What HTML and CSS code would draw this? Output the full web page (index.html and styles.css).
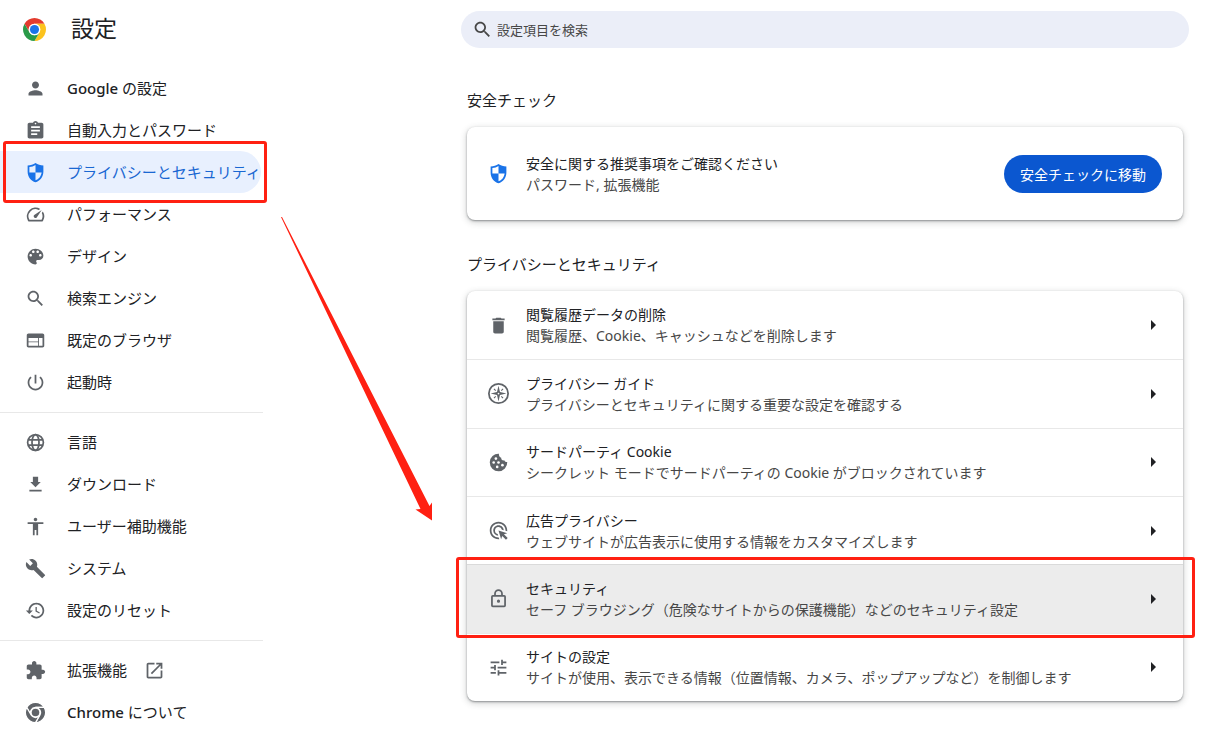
FILE: index.html
```html
<!DOCTYPE html>
<html lang="ja">
<head>
  <meta charset="UTF-8" />
  <meta name="viewport" content="width=device-width, initial-scale=1.0"/>
  <title>設定</title>
  <link rel="stylesheet" href="styles.css">
</head>
<body>

  <div class="sidebar">
    <div class="brand">
      <svg class="logo" viewBox="0 0 48 48">
        <path fill="#e33b2e" d="M3.22 12A24 24 0 0 1 44.78 12H24A12 12 0 0 0 13.6 30z"/>
        <path fill="#fcc31e" d="M44.78 12H24a12 12 0 0 1 10.4 18L24 48A24 24 0 0 0 44.78 12z"/>
        <path fill="#2a9a48" d="M3.22 12 13.6 30A12 12 0 0 0 34.4 30L24 48A24 24 0 0 1 3.22 12z"/>
        <circle cx="24" cy="24" r="12" fill="#fff"/>
        <circle cx="24" cy="24" r="9.5" fill="#1a73e8"/>
      </svg>
      <h1>設定</h1>
    </div>

    <nav class="menu">
      <a href="#" class="menu-item">
        <svg class="icon" viewBox="0 0 24 24"><path d="M12 12c2.21 0 4-1.79 4-4s-1.79-4-4-4-4 1.79-4 4 1.79 4 4 4zm0 2c-2.67 0-8 1.34-8 4v2h16v-2c0-2.66-5.33-4-8-4z"/></svg>
        <span><span class="latin">Google</span> の設定</span>
      </a>
      <a href="#" class="menu-item">
        <svg class="icon" viewBox="0 0 24 24"><path d="M19 3h-4.18C14.4 1.84 13.3 1 12 1c-1.3 0-2.4.84-2.82 2H5c-1.1 0-2 .9-2 2v14c0 1.1.9 2 2 2h14c1.1 0 2-.9 2-2V5c0-1.1-.9-2-2-2zm-7 0c.55 0 1 .45 1 1s-.45 1-1 1-1-.45-1-1 .45-1 1-1zm2 14H7v-2h7v2zm3-4H7v-2h10v2zm0-4H7V7h10v2z"/></svg>
        <span>自動入力とパスワード</span>
      </a>
      <a href="#" class="menu-item active">
        <svg class="icon" viewBox="0 0 24 24"><path d="M12 1C9.5 2.8 6.5 3.8 3 4v7c0 5.55 3.84 10.74 9 12 5.16-1.26 9-6.45 9-12V4c-3.5-.2-6.5-1.2-9-3zm0 11h7c-.53 4.12-3.28 7.79-7 8.94V12H5V5.8c2.6-.3 5-1.1 7-2.4z"/></svg>
        <span>プライバシーとセキュリティ</span>
      </a>
      <a href="#" class="menu-item">
        <svg class="icon" viewBox="0 0 24 24"><path d="M20.38 8.57l-1.23 1.85a8 8 0 0 1-.22 7.58H5.07A8 8 0 0 1 15.58 6.85l1.85-1.23A10 10 0 0 0 3.35 19a2 2 0 0 0 1.72 1h13.85a2 2 0 0 0 1.74-1 10 10 0 0 0-.27-10.44zm-9.79 6.84a2 2 0 0 0 2.83 0l5.66-8.49-8.49 5.66a2 2 0 0 0 0 2.83z"/></svg>
        <span>パフォーマンス</span>
      </a>
      <a href="#" class="menu-item">
        <svg class="icon" viewBox="0 0 24 24"><path d="M12 3c-4.97 0-9 4.03-9 9s4.03 9 9 9c.83 0 1.5-.67 1.5-1.5 0-.39-.15-.74-.39-1.01-.23-.26-.38-.61-.38-.99 0-.83.67-1.5 1.5-1.5H16c2.76 0 5-2.24 5-5 0-4.42-4.03-8-9-8zm-5.5 9c-.83 0-1.5-.67-1.5-1.5S5.67 9 6.5 9 8 9.67 8 10.5 7.33 12 6.5 12zm3-4C8.67 8 8 7.33 8 6.5S8.67 5 9.5 5s1.5.67 1.5 1.5S10.33 8 9.5 8zm5 0c-.83 0-1.5-.67-1.5-1.5S13.67 5 14.5 5s1.5.67 1.5 1.5S15.33 8 14.5 8zm3 4c-.83 0-1.5-.67-1.5-1.5S16.67 9 17.5 9s1.5.67 1.5 1.5-.67 1.5-1.5 1.5z"/></svg>
        <span>デザイン</span>
      </a>
      <a href="#" class="menu-item">
        <svg class="icon" viewBox="0 0 24 24"><path d="M15.5 14h-.79l-.28-.27C15.41 12.59 16 11.11 16 9.5 16 5.91 13.09 3 9.5 3S3 5.91 3 9.5 5.91 16 9.5 16c1.61 0 3.09-.59 4.23-1.57l.27.28v.79l5 4.99L20.49 19l-4.99-5zm-6 0C7.01 14 5 11.99 5 9.5S7.01 5 9.5 5 14 7.01 14 9.5 11.99 14 9.5 14z"/></svg>
        <span>検索エンジン</span>
      </a>
      <a href="#" class="menu-item">
        <svg class="icon" viewBox="0 0 24 24"><path d="M20 4H4c-1.1 0-1.99.9-1.99 2L2 18c0 1.1.9 2 2 2h16c1.1 0 2-.9 2-2V6c0-1.1-.9-2-2-2zm-5 14H4v-4h11v4zm0-5H4V9h11v4zm5 5h-4V9h4v9z"/></svg>
        <span>既定のブラウザ</span>
      </a>
      <a href="#" class="menu-item">
        <svg class="icon" viewBox="0 0 24 24"><path d="M13 3h-2v10h2V3zm4.83 2.17l-1.42 1.42C17.99 7.86 19 9.81 19 12c0 3.87-3.13 7-7 7s-7-3.13-7-7c0-2.19 1.01-4.14 2.58-5.42L6.17 5.17C4.23 6.82 3 9.26 3 12c0 4.97 4.03 9 9 9s9-4.03 9-9c0-2.74-1.23-5.18-3.17-6.83z"/></svg>
        <span>起動時</span>
      </a>

      <hr>

      <a href="#" class="menu-item">
        <svg class="icon line" viewBox="0 0 24 24"><circle cx="12" cy="12" r="9"/><ellipse cx="12" cy="12" rx="4" ry="9"/><path d="M3.5 9h17M3.5 15h17"/></svg>
        <span>言語</span>
      </a>
      <a href="#" class="menu-item">
        <svg class="icon" viewBox="0 0 24 24"><path d="M18 9h-3V3H9v6H6l6 6zM5 18v2h14v-2H5z"/></svg>
        <span>ダウンロード</span>
      </a>
      <a href="#" class="menu-item">
        <svg class="icon" viewBox="0 0 24 24"><path d="M12 2c1.1 0 2 .9 2 2s-.9 2-2 2-2-.9-2-2 .9-2 2-2zm9 7h-6v13h-2v-6h-2v6H9V9H3V7h18v2z"/></svg>
        <span>ユーザー補助機能</span>
      </a>
      <a href="#" class="menu-item">
        <svg class="icon" viewBox="0 0 24 24"><path d="M22.7 19l-9.1-9.1c.9-2.3.4-5-1.5-6.9-2-2-5-2.4-7.4-1.3L9 6 6 9 1.6 4.7C.4 7.1.9 10.1 2.9 12.1c1.9 1.9 4.6 2.4 6.9 1.5l9.1 9.1c.4.4 1 .4 1.4 0l2.3-2.3c.5-.4.5-1.1.1-1.4z"/></svg>
        <span>システム</span>
      </a>
      <a href="#" class="menu-item">
        <svg class="icon" viewBox="0 0 24 24"><path d="M13 3c-4.97 0-9 4.03-9 9H1l3.89 3.89.07.14L9 12H6c0-3.87 3.13-7 7-7s7 3.13 7 7-3.13 7-7 7c-1.93 0-3.68-.79-4.94-2.06l-1.42 1.42C8.27 19.99 10.51 21 13 21c4.97 0 9-4.03 9-9s-4.03-9-9-9zm-1 5v5l4.28 2.54.72-1.21-3.5-2.08V8H12z"/></svg>
        <span>設定のリセット</span>
      </a>

      <hr>

      <a href="#" class="menu-item">
        <svg class="icon" viewBox="0 0 24 24"><path d="M20.5 11H19V7c0-1.1-.9-2-2-2h-4V3.5C13 2.12 11.88 1 10.5 1S8 2.12 8 3.5V5H4c-1.1 0-1.99.9-1.99 2v3.8H3.5c1.49 0 2.7 1.21 2.7 2.7s-1.21 2.7-2.7 2.7H2V20c0 1.1.9 2 2 2h3.8v-1.5c0-1.49 1.21-2.7 2.7-2.7 1.49 0 2.7 1.21 2.7 2.7V22H17c1.1 0 2-.9 2-2v-4h1.5c1.38 0 2.5-1.12 2.5-2.5S21.88 11 20.5 11z"/></svg>
        <span>拡張機能</span>
        <svg class="icon external" viewBox="0 0 24 24"><path d="M19 19H5V5h7V3H5c-1.11 0-2 .9-2 2v14c0 1.1.89 2 2 2h14c1.1 0 2-.9 2-2v-7h-2v7zM14 3v2h3.59l-9.83 9.83 1.41 1.41L19 6.41V10h2V3h-7z"/></svg>
      </a>
      <a href="#" class="menu-item">
        <svg class="icon" viewBox="-1 -1 50 50">
          <g stroke="#fff" stroke-width="3">
            <path d="M3.22 12A24 24 0 0 1 44.78 12H24A12 12 0 0 0 13.6 30z"/>
            <path d="M44.78 12H24a12 12 0 0 1 10.4 18L24 48A24 24 0 0 0 44.78 12z"/>
            <path d="M3.22 12 13.6 30A12 12 0 0 0 34.4 30L24 48A24 24 0 0 1 3.22 12z"/>
          </g>
          <circle cx="24" cy="24" r="9"/>
        </svg>
        <span><span class="latin">Chrome</span> について</span>
      </a>
    </nav>
  </div>

  <main class="content">
    <form class="search" role="search">
      <label for="search"><svg class="icon" viewBox="0 0 24 24"><path d="M15.5 14h-.79l-.28-.27C15.41 12.59 16 11.11 16 9.5 16 5.91 13.09 3 9.5 3S3 5.91 3 9.5 5.91 16 9.5 16c1.61 0 3.09-.59 4.23-1.57l.27.28v.79l5 4.99L20.49 19l-4.99-5zm-6 0C7.01 14 5 11.99 5 9.5S7.01 5 9.5 5 14 7.01 14 9.5 11.99 14 9.5 14z"/></svg></label>
      <input type="text" id="search" placeholder="設定項目を検索" aria-label="設定項目を検索">
    </form>

    <section class="safety">
      <h2>安全チェック</h2>
      <div class="card safety-card">
        <svg class="icon shield" viewBox="0 0 24 24"><path d="M12 1C9.5 2.8 6.5 3.8 3 4v7c0 5.55 3.84 10.74 9 12 5.16-1.26 9-6.45 9-12V4c-3.5-.2-6.5-1.2-9-3zm0 11h7c-.53 4.12-3.28 7.79-7 8.94V12H5V5.8c2.6-.3 5-1.1 7-2.4z"/></svg>
        <div class="text">
          <div class="title">安全に関する推奨事項をご確認ください</div>
          <div class="sub">パスワード, 拡張機能</div>
        </div>
        <button type="button" class="btn">安全チェックに移動</button>
      </div>
    </section>

    <section class="privacy">
      <h2>プライバシーとセキュリティ</h2>
      <div class="card list">
        <a href="#" class="row">
          <svg class="icon" viewBox="0 0 24 24"><path d="M6 19c0 1.1.9 2 2 2h8c1.1 0 2-.9 2-2V7H6v12zM19 4h-3.5l-1-1h-5l-1 1H5v2h14V4z"/></svg>
          <div class="text">
            <div class="title">閲覧履歴データの削除</div>
            <div class="sub">閲覧履歴、Cookie、キャッシュなどを削除します</div>
          </div>
          <span class="arrow"></span>
        </a>
        <a href="#" class="row">
          <svg class="icon" viewBox="0 0 24 24"><circle cx="12" cy="12" r="11" fill="none" stroke="currentColor" stroke-width="2"/><path d="M12 3l1.7 7.3L21 12l-7.3 1.7L12 21l-1.7-7.3L3 12l7.3-1.7z"/><path d="M6.8 6.8l2 2M17.2 6.8l-2 2M6.8 17.2l2-2M17.2 17.2l-2-2" stroke="currentColor" stroke-width="1.2"/><circle cx="12" cy="12" r="1" fill="#fff"/></svg>
          <div class="text">
            <div class="title">プライバシー ガイド</div>
            <div class="sub">プライバシーとセキュリティに関する重要な設定を確認する</div>
          </div>
          <span class="arrow"></span>
        </a>
        <a href="#" class="row">
          <svg class="icon" viewBox="0 0 24 24"><path d="M12.5 2A10 10 0 1 0 22 11.5c-1.6.3-3-.6-3.4-2-2 .5-3.8-1-3.5-3-1.8-.5-3-2.3-2.6-4.5z"/><g fill="#fff"><circle cx="9" cy="7.5" r="1.5"/><circle cx="6.5" cy="12" r="1.5"/><circle cx="12" cy="12" r="1.5"/><circle cx="10.5" cy="17" r="1.5"/><circle cx="16.5" cy="15" r="1.5"/></g></svg>
          <div class="text">
            <div class="title">サードパーティ Cookie</div>
            <div class="sub">シークレット モードでサードパーティの Cookie がブロックされています</div>
          </div>
          <span class="arrow"></span>
        </a>
        <a href="#" class="row">
          <svg class="icon" viewBox="0 0 24 24"><path d="M11.71 17.99A5.993 5.993 0 0 1 6 12c0-3.31 2.69-6 6-6 3.22 0 5.84 2.53 5.99 5.71l-2.1-.63a3.999 3.999 0 1 0-4.81 4.81l.63 2.1zM22 12c0 .3-.01.6-.04.9l-1.97-.59c.01-.1.01-.21.01-.31 0-4.42-3.58-8-8-8s-8 3.58-8 8 3.58 8 8 8c.1 0 .21 0 .31-.01l.59 1.97c-.3.03-.6.04-.9.04-5.52 0-10-4.48-10-10S6.48 2 12 2s10 4.48 10 10zm-3.77 4.26L22 15l-10-3 3 10 1.26-3.77 4.27 4.27 1.98-1.98-4.28-4.26z"/></svg>
          <div class="text">
            <div class="title">広告プライバシー</div>
            <div class="sub">ウェブサイトが広告表示に使用する情報をカスタマイズします</div>
          </div>
          <span class="arrow"></span>
        </a>
        <a href="#" class="row selected">
          <svg class="icon line" viewBox="0 0 24 24"><rect x="4.5" y="9" width="15" height="12" rx="1"/><path d="M8 9V6.5a4 4 0 0 1 8 0V9"/><circle cx="12" cy="15" r=".8"/></svg>
          <div class="text">
            <div class="title">セキュリティ</div>
            <div class="sub">セーフ ブラウジング（危険なサイトからの保護機能）などのセキュリティ設定</div>
          </div>
          <span class="arrow"></span>
        </a>
        <a href="#" class="row">
          <svg class="icon" viewBox="0 0 24 24"><path d="M3 17v2h6v-2H3zM3 5v2h10V5H3zm10 16v-2h8v-2h-8v-2h-2v6h2zM7 9v2H3v2h4v2h2V9H7zm14 4v-2H11v2h10zm-6-4h2V7h4V5h-4V3h-2v6z"/></svg>
          <div class="text">
            <div class="title">サイトの設定</div>
            <div class="sub">サイトが使用、表示できる情報（位置情報、カメラ、ポップアップなど）を制御します</div>
          </div>
          <span class="arrow"></span>
        </a>
      </div>
    </section>
  </main>

  <!-- arrow from the menu item to the security row -->
  <svg class="pointer" viewBox="0 0 152 304"><path d="M0 0h1L148.500 289 151 285.500V303.500L134.500 292.500 139.500 292z"/></svg>

</body>
</html>
```
FILE: styles.css
```css
* {
  box-sizing: border-box;
}

body {
  position: relative;
  display: flex;
  justify-content: space-between;
  margin: 0;
  background: #fff;
  color: #202124;
  font-family: "Noto Sans", "Noto Sans CJK JP", sans-serif;
  font-size: 14px;
  line-height: 21px;
}

a {
  color: inherit;
  text-decoration: none;
}

h1, h2 {
  margin: 0;
  font-weight: 400;
}

.icon {
  flex: none;
  width: 21px;
  height: 21px;
  color: #5f6368;
  fill: currentColor;
}

.line {
  fill: none;
  stroke: currentColor;
  stroke-width: 2;
}

/* sidebar */
.sidebar {
  flex: 0 0 263px;
}

.brand {
  display: flex;
  align-items: center;
  gap: 25px;
  height: 58px;
  padding-left: 23px;
}

.brand h1 {
  padding-bottom: 2px;
  font-size: 23px;
  line-height: 32px;
}

.logo {
  width: 23px;
  height: 23px;
}

.menu {
  padding-top: 9px;
}

.menu hr {
  margin: 9px 0 8px;
  border: 0;
  border-top: 1px solid #e8e8e8;
}

.menu-item {
  position: relative;
  display: flex;
  align-items: center;
  gap: 21px;
  min-height: 42px;
  margin-right: 2px;
  padding-left: 25px;
  font-size: 15px;
  white-space: nowrap;
}

.latin {
  font-weight: 500;
}

.external {
  margin-left: -4px;
}

.active {
  background: #e8f0fe;
  border-radius: 0 21px 21px 0;
  color: #1967d2;
}

.active .icon,
.shield {
  color: #1a73e8;
}

/* red frames */
.active::after,
.selected::after {
  content: "";
  position: absolute;
  inset: -10px -6px -10px 3px;
  border: 3px solid #ff2012;
  border-radius: 3px;
  pointer-events: none;
  z-index: 1;
}

.selected::after {
  inset: -8px -12px -5px -11px;
}

.pointer {
  position: absolute;
  left: 281px;
  top: 217px;
  width: 152px;
  height: 304px;
  fill: #ff2012;
  pointer-events: none;
}

/* content */
.content {
  flex: 0 1 728px;
  margin: 11px 33px 42px 24px;
}

.search {
  display: flex;
  align-items: center;
  gap: 4px;
  height: 37px;
  padding: 0 11px;
  background: #ebeef8;
  border-radius: 19px;
}

.search label {
  display: flex;
}

.search .icon {
  color: #474747;
}

.search input {
  flex: 1;
  padding: 0;
  border: 0;
  outline: 0;
  background: none;
  font-family: inherit;
  font-size: 13px;
}

.search input::placeholder {
  color: #474747;
  opacity: 1;
}

section {
  padding: 0 6px;
}

.safety {
  margin-top: 40px;
}

.privacy {
  margin-top: 32px;
}

h2 {
  margin-bottom: 15px;
  font-size: 15px;
  line-height: 24px;
}

.card {
  background: #fff;
  border-radius: 8px;
  box-shadow: 0 1px 2px rgba(60, 64, 67, 0.5), 0 2px 6px 1px rgba(60, 64, 67, 0.2);
}

.safety-card {
  display: flex;
  align-items: center;
  gap: 17px;
  min-height: 93px;
  padding: 0 21px;
}

.text {
  flex: 1;
  min-width: 0;
}

.sub {
  color: #474747;
}

.btn {
  height: 38px;
  padding: 0 16px;
  border: 0;
  border-radius: 19px;
  background: #0b57d0;
  color: #fff;
  font-family: inherit;
  font-size: 14px;
  cursor: pointer;
}

.list {
  display: grid;
  grid-auto-rows: 1fr;
  min-height: 410px;
}

.row {
  position: relative;
  display: flex;
  align-items: center;
  gap: 17px;
  padding: 0 27px 0 21px;
}

.row + .row {
  border-top: 1px solid #e8e8e8;
}

.selected {
  background: #ececec;
}

.row.selected {
  border-top-color: #dadada;
}

.arrow {
  border: solid transparent;
  border-width: 5px 0 5px 5px;
  border-left-color: #202124;
}
```
